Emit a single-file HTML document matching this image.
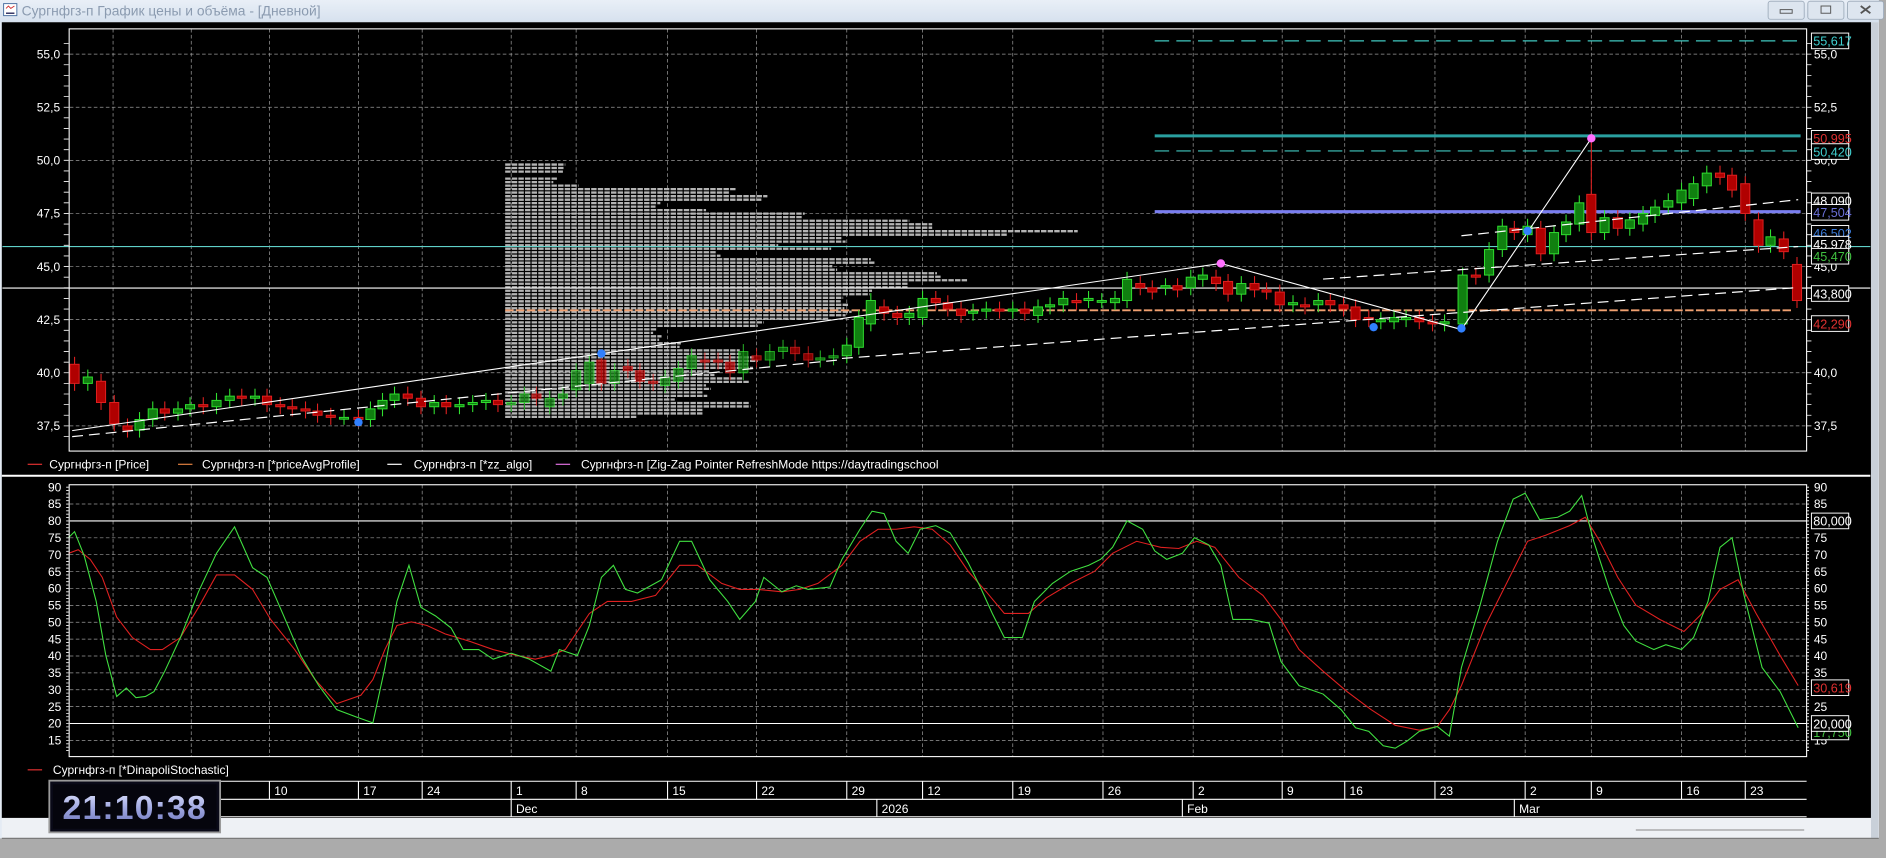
<!DOCTYPE html>
<html><head><meta charset="utf-8"><style>
html,body{margin:0;padding:0;background:#ababab;width:1886px;height:858px;overflow:hidden}
svg{display:block}
text{font-family:"Liberation Sans","DejaVu Sans",sans-serif}
</style></head><body>
<svg id="s" width="1886" height="858" viewBox="0 0 1568 713.3" preserveAspectRatio="none" xmlns="http://www.w3.org/2000/svg">
<defs>
<linearGradient id="tb" x1="0" y1="0" x2="0" y2="1"><stop offset="0" stop-color="#e9eff7"/><stop offset="1" stop-color="#d6e1ee"/></linearGradient>
<linearGradient id="ck" x1="0" y1="0" x2="0" y2="1"><stop offset="0" stop-color="#e0e4ff"/><stop offset="0.5" stop-color="#9ea6e0"/><stop offset="1" stop-color="#6a72b8"/></linearGradient>
</defs>
<rect x="0" y="0" width="1568" height="713.3" fill="#ababab"/>
<rect x="0" y="0" width="1562" height="697" fill="#e4ebf4"/>
<rect x="0" y="0" width="1562" height="18.5" fill="url(#tb)"/>
<rect x="3" y="3" width="11" height="10" fill="#fff" stroke="#4a6fa0" stroke-width="0.8"/>
<path d="M5 7 l2 -2 l2 2 l3 -2" stroke="#d03030" fill="none" stroke-width="0.8"/>
<path d="M5 11 h7" stroke="#303060" stroke-width="1.2"/>
<text x="18" y="13" font-size="11.5" fill="#8b9bb0">Сургнфгз-п График цены и объёма - [Дневной]</text>
<rect x="1470" y="1" width="30" height="15" rx="2" fill="#dde5ef" stroke="#9aa8b8" stroke-width="0.7"/>
<rect x="1503" y="1" width="30" height="15" rx="2" fill="#dde5ef" stroke="#9aa8b8" stroke-width="0.7"/>
<rect x="1536" y="1" width="30" height="15" rx="2" fill="#dde5ef" stroke="#9aa8b8" stroke-width="0.7"/>
<rect x="1480" y="8" width="10" height="3" fill="none" stroke="#555" stroke-width="0.8"/>
<rect x="1514" y="5" width="8" height="6" fill="none" stroke="#555" stroke-width="0.8"/>
<path d="M1547 5 l8 6 M1555 5 l-8 6" stroke="#555" stroke-width="1.5"/>
<rect x="1.5" y="18.5" width="1554" height="661.5" fill="#000"/>
<rect x="1555.5" y="18.5" width="6" height="678" fill="#c9d0d9"/>
<rect x="1.5" y="680" width="1554" height="17" fill="#eef1f5"/>
<path d="M1.5 697 H1562" stroke="#7a7a7a" stroke-width="1"/>
<path d="M1360 690 H1500" stroke="#888" stroke-width="0.8"/>

<g id="grid" stroke="#9a9a9a" stroke-width="0.6" stroke-dasharray="3 2" fill="none"></g>
<g id="top"></g>
<g id="bot"></g>

<rect x="57.5" y="24" width="1444.5" height="351" fill="none" stroke="#fff" stroke-width="0.9"/>
<rect x="57.5" y="403" width="1444.5" height="226" fill="none" stroke="#fff" stroke-width="0.9"/>
<path d="M1.5 395.5 H1555" stroke="#fff" stroke-width="1.6"/>

<g font-size="10" fill="#fff">
<path d="M23 386 h12" stroke="#e03030"/><text x="41" y="389.5">Сургнфгз-п [Price]</text>
<path d="M148 386 h12" stroke="#e08040"/><text x="168" y="389.5">Сургнфгз-п [*priceAvgProfile]</text>
<path d="M322 386 h12" stroke="#fff"/><text x="344" y="389.5">Сургнфгз-п [*zz_algo]</text>
<path d="M462 386 h12" stroke="#e070e0"/><text x="483" y="389.5">Сургнфгз-п [Zig-Zag Pointer RefreshMode https://daytradingschool</text>
<path d="M23 640 h12" stroke="#e03030"/><text x="44" y="643.5">Сургнфгз-п [*DinapoliStochastic]</text>
</g>

<g stroke="#fff" stroke-width="0.9" fill="none">
<path d="M170 649.5 H1502 M170 664.5 H1502 M170 679 H1502"/>
</g>
<g id="tax" font-size="10" fill="#fff"></g>

<rect x="41" y="649" width="142" height="43" fill="#0a0a18" stroke="#9a9a9a" stroke-width="1.5"/>
<rect x="44" y="652" width="136" height="37" fill="#05050d"/>
<text x="112" y="681" font-size="28" font-weight="bold" text-anchor="middle" fill="url(#ck)" letter-spacing="1">21:10:38</text>
</svg>
<script>
const NS="http://www.w3.org/2000/svg";
const S=document.getElementById('s');
function el(p,tag,a,txt){const e=document.createElementNS(NS,tag);for(const k in a)e.setAttribute(k,a[k]);if(txt!==undefined)e.textContent=txt;p.appendChild(e);return e;}
const G=document.getElementById('grid'),T=document.getElementById('top'),B=document.getElementById('bot'),TX=document.getElementById('tax');
const py=p=>45+(55-p)*17.66, sy=v=>405+(90-v)*2.807;
const vx=[94,159,224,298,351,425,479,555,629,704,767,842,917,992,1066,1118,1193,1268,1323,1398,1451];
let d='';
vx.forEach(x=>{d+=`M${x} 24V375M${x} 403V629`;});
[55,52.5,50,47.5,45,42.5,40,37.5].forEach(p=>{d+=`M58 ${py(p)}H1502`;});
[85,75,70,65,60,55,50,45,40,35,30,25,15].forEach(v=>{d+=`M58 ${sy(v)}H1502`;});
el(G,'path',{d});
let tk='';
for(let p=37;p<=55.6;p+=0.5){const y=py(p);tk+=`M53 ${y}H57M1502 ${y}H1506`;}
for(let v=12;v<=90;v+=1){const y=sy(v);tk+=`M55 ${y}H57M1502 ${y}H1504`;}
el(T,'path',{d:tk,stroke:'#fff','stroke-width':0.7});
[[55,'55,0'],[52.5,'52,5'],[50,'50,0'],[47.5,'47,5'],[45,'45,0'],[42.5,'42,5'],[40,'40,0'],[37.5,'37,5']].forEach(([p,t])=>{
 el(T,'text',{x:50,y:py(p)+3.5,'font-size':10,fill:'#fff','text-anchor':'end'},t);
 el(T,'text',{x:1508,y:py(p)+3.5,'font-size':10,fill:'#fff'},t);});
for(let v=15;v<=90;v+=5){el(B,'text',{x:51,y:sy(v)+3.5,'font-size':10,fill:'#fff','text-anchor':'end'},v);el(B,'text',{x:1508,y:sy(v)+3.5,'font-size':10,fill:'#fff'},v);}
const dl=[[224,'10'],[298,'17'],[351,'24'],[425,'1'],[479,'8'],[555,'15'],[629,'22'],[704,'29'],[767,'12'],[842,'19'],[917,'26'],[992,'2'],[1066,'9'],[1118,'16'],[1193,'23'],[1268,'2'],[1323,'9'],[1398,'16'],[1451,'23']];
let td='';
dl.forEach(([x,t])=>{td+=`M${x} 649.5V664.5`;el(TX,'text',{x:x+4,y:661},t);});
[[425,'Dec'],[729,'2026'],[983,'Feb'],[1259,'Mar']].forEach(([x,t])=>{td+=`M${x} 664.5V679`;el(TX,'text',{x:x+4,y:676},t);});
el(TX,'path',{d:td,stroke:'#fff','stroke-width':0.9});
const prof=[[49.8,445],[49.2,445],[48.9,470],[48.7,605],[48.4,640],[48.1,560],[47.8,605],[47.5,690],[47.3,780],[47.0,800],[46.8,920],[46.6,860],[46.4,720],[46.1,660],[45.9,700],[45.7,600],[45.4,720],[45.1,680],[44.8,760],[44.5,780],[44.2,730],[43.9,700],[43.6,680],[43.3,690],[43.0,700],[42.7,690],[42.4,640],[42.1,560],[41.8,570],[41.5,590],[41.1,640],[40.8,650],[40.5,640],[40.2,600],[39.9,620],[39.5,580],[39.2,570],[38.9,540],[38.6,600],[38.3,560],[38.0,505]];
let pd='';
for(let p=49.8;p>=37.9;p-=0.165){
 let i=0;while(i<prof.length-1&&prof[i+1][0]>p)i++;
 let L=prof[i][1]; L+= (Math.sin(p*37)*25);
 if(p>49&&p<49.5&&Math.abs(p-49.3)<0.1)continue;
 pd+=`M420 ${py(p).toFixed(1)}H${L.toFixed(0)}`;}
el(T,'path',{d:pd,stroke:'#c4c4c4','stroke-width':1.9,'stroke-dasharray':'4.5 1','opacity':0.92});
el(T,'path',{d:`M2 205H1555`,stroke:'#5fd0c8','stroke-width':0.9});
el(T,'path',{d:`M2 239.5H1555`,stroke:'#fff','stroke-width':0.9});
el(T,'path',{d:`M420 258H1490`,stroke:'#f0a070','stroke-width':1.6,'stroke-dasharray':'7 2'});
el(T,'path',{d:`M960 113H1497`,stroke:'#2aa0a0','stroke-width':2.5});
el(T,'path',{d:`M960 125.5H1497`,stroke:'#40c8c0','stroke-width':1,'stroke-dasharray':'12 6'});
el(T,'path',{d:`M960 34H1497`,stroke:'#40c8c0','stroke-width':1,'stroke-dasharray':'12 6'});
el(T,'path',{d:`M960 176H1497`,stroke:'#7a7ef0','stroke-width':2.6});
const pts=[[62,40.4,39.5],[73,39.5,39.8],[84,39.6,38.6],[95,38.6,37.6],[106,37.5,37.3],[116,37.3,37.8],[127,37.8,38.3],[137,38.3,38.1],[148,38.1,38.3],[158,38.3,38.5],[169,38.5,38.4],[180,38.4,38.7],[191,38.7,38.9],[201,38.9,38.8],[212,38.8,38.9],[222,38.9,38.5],[233,38.5,38.4],[243,38.4,38.3],[254,38.3,38.2],[264,38.2,38.0],[275,38.0,37.9],[286,37.9,37.9],[298,37.9,37.8],[308,37.8,38.3],[318,38.3,38.7],[328,38.7,39.0],[339,39.0,38.8],[350,38.8,38.4],[361,38.4,38.6],[371,38.6,38.4],[382,38.4,38.5],[393,38.5,38.6],[404,38.6,38.7],[414,38.7,38.5],[425,38.5,38.6],[436,38.6,39.0],[446,39.0,38.8],[457,38.4,38.8],[468,38.8,39.0],[479,39.2,40.1],[490,39.5,40.5],[500,40.6,39.5],[511,39.5,40.1],[522,40.3,40.1],[532,40.1,39.6],[543,39.6,39.5],[553,39.4,39.8],[564,39.6,40.2],[575,40.2,40.8],[586,40.6,40.5],[597,40.6,40.5],[607,40.5,40.0],[618,40.0,41.0],[629,40.8,40.6],[640,40.6,41.0],[651,41.0,41.2],[661,41.2,40.9],[672,40.9,40.6],[682,40.6,40.7],[693,40.7,40.8],[704,40.8,41.3],[714,41.2,42.6],[724,42.3,43.4],[735,43.1,42.8],[746,42.8,42.6],[756,42.6,42.8],[767,42.6,43.5],[778,43.5,43.3],[788,43.3,43.0],[799,43.0,42.7],[809,42.8,42.9],[820,42.9,43.0],[831,43.0,42.9],[842,42.9,43.0],[852,43.0,42.8],[863,42.7,43.1],[873,43.1,43.2],[884,43.2,43.5],[895,43.4,43.3],[905,43.4,43.5],[916,43.4,43.4],[927,43.3,43.5],[937,43.4,44.4],[948,44.2,44.0],[958,44.0,43.8],[969,44.0,44.1],[979,44.1,43.9],[990,44.0,44.5],[1000,44.4,44.6],[1011,44.5,44.2],[1021,44.3,43.7],[1032,43.7,44.2],[1043,44.2,43.9],[1053,43.9,43.8],[1064,43.8,43.2],[1075,43.2,43.3],[1085,43.2,43.1],[1096,43.2,43.4],[1106,43.4,43.2],[1117,43.2,43.0],[1127,43.1,42.5],[1138,42.6,42.5],[1148,42.4,42.5],[1159,42.4,42.6],[1169,42.5,42.6],[1180,42.6,42.4],[1191,42.4,42.3],[1201,42.3,42.4],[1216,42.3,44.6],[1227,44.6,44.5],[1238,44.6,45.8],[1249,45.8,46.9],[1259,46.8,46.6],[1270,46.5,46.9],[1281,46.8,45.6],[1292,45.6,46.6],[1302,46.5,47.1],[1313,47.0,48.0],[1323,48.4,46.6],[1334,46.6,47.3],[1345,47.3,46.8],[1355,46.8,47.2],[1366,47.0,47.5],[1376,47.4,47.8],[1387,47.8,48.1],[1398,48.0,48.6],[1408,48.2,48.9],[1419,48.8,49.4],[1430,49.4,49.2],[1440,49.3,48.6],[1451,48.9,47.5],[1462,47.2,46.0],[1472,46.0,46.4],[1483,46.3,45.7],[1494,45.1,43.4]];
let cs='';
pts.forEach(([x,o,c],i)=>{
 const up=c>=o; let hi=Math.max(o,c)+0.35, lo=Math.min(o,c)-0.35;
 if(x==1323)hi=50.9;
 const col=up?'#30e030':'#e02020', fill=up?'#108010':'#b00000';
 const y1=py(Math.max(o,c)), y2=py(Math.min(o,c));
 const dim=(x>420&&x<700)?0.75:1;
 cs+=`<line x1="${x}" x2="${x}" y1="${py(hi)}" y2="${py(lo)}" stroke="${col}" stroke-width="0.9" opacity="${dim}"/>`;
 cs+=`<rect x="${x-3.8}" y="${y1}" width="7.6" height="${Math.max(1.5,y2-y1)}" fill="${fill}" stroke="${col}" stroke-width="0.8" opacity="${dim}"/>`;
});
const cg=el(T,'g',{});cg.innerHTML=cs;
el(T,'path',{d:'M60 358L1015 219L1215 274L1323 115',stroke:'#fff','stroke-width':0.9,fill:'none'});
el(T,'path',{d:'M60 363L700 299M700 298L1495 239M1215 196L1495 166M1100 232L1495 205',stroke:'#fff','stroke-width':1,fill:'none','stroke-dasharray':'9 5'});
[[1015,219,'#ff70ff'],[1323,115,'#ff70ff'],[298,351,'#3080ff'],[500,294,'#3080ff'],[1142,272,'#3080ff'],[1215,273,'#3080ff'],[1270,192,'#3080ff']].forEach(([x,y,c])=>el(T,'circle',{cx:x,cy:y,r:3.5,fill:c}));
const rl=[[34,'55,617','#40d0d0'],[115,'50,995','#e03030'],[126,'50,420','#40d0d0'],[167,'48,090','#fff'],[176.5,'47,504','#6a70d8'],[194,'46,502','#3a7ad8'],[203,'45,978','#fff'],[213,'45,470','#40c040'],[244,'43,800','#fff'],[269,'42,290','#e03030']];
rl.forEach(([y,t,c])=>{el(T,'rect',{x:1506,y:y-6.5,width:31,height:13,fill:'#000',stroke:'#fff','stroke-width':0.8});el(T,'text',{x:1507.5,y:y+4,'font-size':10.5,fill:c},t);});
const g='57,447 62,442 70,462 80,500 88,545 97,579 105,572 113,580 121,579 128,575 137,558 150,530 165,492 180,460 195,438 210,472 222,480 235,510 250,545 265,570 280,590 296,596 310,601 320,555 330,500 340,470 350,505 362,512 375,522 385,540 398,540 410,548 425,543 440,548 458,558 465,540 480,545 490,520 500,480 510,470 520,490 530,493 550,482 565,450 575,450 590,482 605,500 615,515 628,500 635,480 650,492 662,487 672,490 690,488 700,465 715,440 725,425 735,427 745,450 755,460 765,440 778,437 790,443 805,468 815,488 825,510 835,530 850,530 860,500 875,485 890,475 905,470 915,465 925,455 937,433 950,440 960,458 970,465 983,460 993,447 1005,453 1015,470 1025,515 1040,515 1055,518 1065,550 1080,570 1100,577 1115,590 1127,605 1138,608 1150,620 1160,622 1170,616 1180,608 1195,604 1205,612 1215,555 1230,505 1245,450 1258,415 1268,410 1280,432 1295,430 1305,425 1315,412 1325,450 1338,490 1350,520 1360,533 1375,540 1385,536 1398,540 1408,530 1420,500 1430,455 1440,447 1450,495 1465,555 1480,575 1495,605';
const r='57,460 65,457 75,465 85,480 97,513 110,530 125,540 135,540 150,530 165,505 180,478 195,478 210,490 225,515 245,540 262,565 280,585 300,578 310,565 320,540 330,520 342,517 355,520 370,527 390,533 410,540 430,545 445,548 458,545 470,540 480,525 490,510 505,500 525,500 545,495 565,470 580,470 600,485 615,490 630,490 650,492 665,490 680,485 700,470 715,450 730,440 745,440 760,438 775,440 790,453 805,475 820,492 835,510 855,510 870,497 890,485 910,475 925,460 945,450 965,455 980,456 995,450 1010,455 1030,480 1050,495 1065,515 1080,540 1100,558 1120,575 1140,590 1160,603 1180,607 1195,604 1205,590 1215,570 1235,520 1255,480 1270,450 1285,445 1305,437 1318,430 1330,450 1345,480 1360,503 1380,515 1400,525 1415,510 1430,490 1445,482 1460,510 1480,545 1495,570';
el(B,'path',{d:`M58 ${sy(80)}H1502M58 ${sy(20)}H1502`,stroke:'#fff','stroke-width':0.9});
el(B,'polyline',{points:r,fill:'none',stroke:'#e02020','stroke-width':0.9});
el(B,'polyline',{points:g,fill:'none',stroke:'#40e040','stroke-width':0.9});
[[sy(80),'80,000','#fff'],[sy(30.6),'30,619','#e03030'],[sy(17.5),'17,750','#40c040'],[sy(20),'20,000','#fff']].forEach(([y,t,c])=>{el(B,'rect',{x:1506,y:y-6.5,width:31,height:13,fill:'#000',stroke:'#fff','stroke-width':0.8});el(B,'text',{x:1507.5,y:y+4,'font-size':10.5,fill:c},t);});
</script>
</body></html>
